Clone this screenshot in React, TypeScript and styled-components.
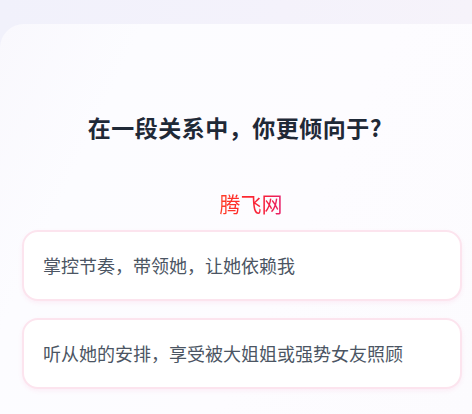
import React from "react";
import styled, { createGlobalStyle } from "styled-components";

const Global = createGlobalStyle`
  html, body {
    margin: 0;
    padding: 0;
    width: 472px;
    height: 414px;
    overflow: hidden;
    background: linear-gradient(90deg, #f1f1fb 0%, #f4f2fb 60%, #f6f3fa 100%);
    font-family: "Noto Sans CJK SC", "Noto Sans", sans-serif;
  }
`;

const Page = styled.div`
  width: 472px;
  height: 414px;
  padding-top: 24px;
  box-sizing: border-box;
`;

const Card = styled.main`
  height: 390px;
  border-top-left-radius: 24px;
  background: linear-gradient(115deg, #f9f8fd 0%, #fcfcff 22%, #fdfcff 60%, #fcfbfe 100%);
  padding: 87px 10px 0 22px;
  box-sizing: border-box;
  display: flex;
  flex-direction: column;
`;

const Title = styled.h1`
  margin: 0;
  padding-right: 14px;
  text-align: center;
  font-size: 23px;
  line-height: 32px;
  font-weight: 700;
  color: #1f2937;
  letter-spacing: 0.5px;
`;

const Watermark = styled.div`
  margin-top: 47px;
  padding-left: 18px;
  text-align: center;
  font-size: 21px;
  line-height: 26px;
  font-weight: 400;
  font-family: "Noto Sans CJK SC", serif;
  background: linear-gradient(90deg, #ff5526 0%, #ff2a2a 45%, #f5203f 80%, #e62070 100%);
  -webkit-background-clip: text;
  background-clip: text;
  color: transparent;
  align-self: center;
`;

const Options = styled.div`
  margin-top: 14px;
  display: flex;
  flex-direction: column;
  gap: 17px;
`;

const Option = styled.button`
  display: block;
  width: 100%;
  box-sizing: border-box;
  text-align: left;
  background: #ffffff;
  border: 2px solid #fce4ee;
  border-radius: 16px;
  padding: 22px 19px;
  font-family: "Noto Sans CJK SC", "Noto Sans", sans-serif;
  font-size: 18px;
  line-height: 23px;
  font-weight: 400;
  color: #4b5563;
  box-shadow: 0 2px 4px rgba(236, 72, 153, 0.08);
  cursor: pointer;
`;

export default function App() {
  return (
    <>
      <Global />
      <Page>
        <Card>
          <Title>在一段关系中，你更倾向于?</Title>
          <Watermark>腾飞网</Watermark>
          <Options>
            <Option>掌控节奏，带领她，让她依赖我</Option>
            <Option>听从她的安排，享受被大姐姐或强势女友照顾</Option>
          </Options>
        </Card>
      </Page>
    </>
  );
}
